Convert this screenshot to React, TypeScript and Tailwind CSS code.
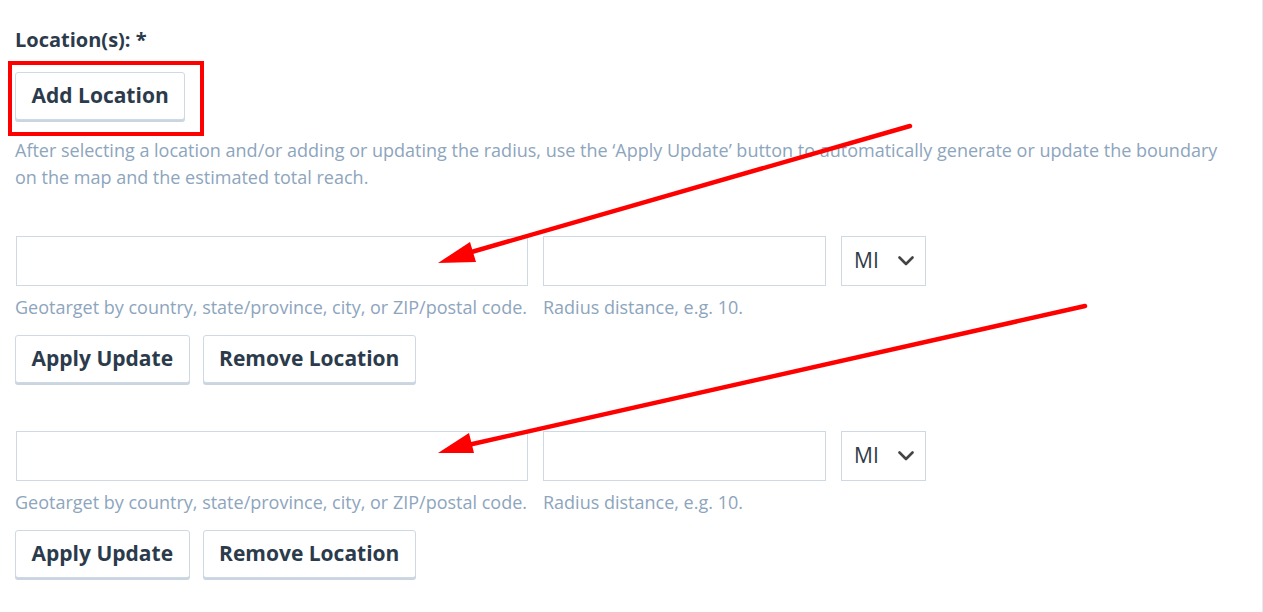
function LocationRow() {
  return (
    <div className="mt-[48px] first:mt-0">
      <div className="flex items-start">
        <div className="w-[513px]">
          <input className="ml-px block w-[512px] h-[50px] border border-[#cfd9e3] bg-white px-3 text-[18px] outline-none" />
          <p className="mt-[9px] text-[18px] leading-[24px] text-[#8da5bd]">
            Geotarget by country, state/province, city, or ZIP/postal code.
          </p>
        </div>
        <div className="ml-[15px] w-[283px]">
          <input className="block w-full h-[50px] border border-[#cfd9e3] bg-white px-3 text-[18px] outline-none" />
          <p className="mt-[9px] text-[18px] leading-[24px] text-[#8da5bd]">Radius distance, e.g. 10.</p>
        </div>
        <div className="ml-[15px] flex h-[50px] w-[85px] items-center justify-between border border-[#cfd9e3] bg-white pl-[12px] pr-[11px] text-[21px] text-[#2f3b47]">
          <span>MI</span>
          <svg width="16" height="10" viewBox="0 0 16 10">
            <path d="M1.5 1.5 8 8l6.5-6.5" fill="none" stroke="#444" strokeWidth="2.6" strokeLinecap="round" strokeLinejoin="round" />
          </svg>
        </div>
      </div>
      <div className="mt-[16px] flex gap-[13px]">
        <Button>Apply Update</Button>
        <Button>Remove Location</Button>
      </div>
    </div>
  );
}

function Button({ children }: { children: React.ReactNode }) {
  return (
    <button className="h-[48px] rounded-[3px] border border-[#cfd9e3] bg-white px-[15.5px] text-[21px] font-bold text-[#2c3b4b] shadow-[0_2px_0_#c9d5e1]">
      {children}
    </button>
  );
}

export default function App() {
  return (
    <div className="relative min-h-[612px] border-r border-[#e3ebf3] bg-white pl-[15px] pt-[27px] font-['Open_Sans',sans-serif]">
      <label className="block text-[20px] font-bold leading-[26px] text-[#2c3b4b]">Location(s): *</label>
      <div className="mt-[19px]">
        <Button>Add Location</Button>
      </div>
      <p className="mt-[17px] w-[1222px] text-[18px] leading-[27px] text-[#8da5bd]">
        After selecting a location and/or adding or updating the radius, use the ‘Apply Update’ button to automatically generate or update the boundary on the map and the estimated total reach.
      </p>
      <div className="mt-[45px]">
        <LocationRow />
        <LocationRow />
      </div>

      {/* annotations */}
      <div className="pointer-events-none absolute left-[8px] top-[61px] h-[75px] w-[196px] border-4 border-[#ff0000]" />
      <svg className="pointer-events-none absolute left-0 top-0" width="1263" height="612">
        <line x1="910" y1="126" x2="468" y2="253" stroke="#ff0000" strokeWidth="4.5" strokeLinecap="round" />
        <polygon points="438,263 470,242 476,262" fill="#ff0000" />
        <line x1="1085" y1="306" x2="468" y2="445" stroke="#ff0000" strokeWidth="4.5" strokeLinecap="round" />
        <polygon points="438,453 469,433 474,453" fill="#ff0000" />
      </svg>
    </div>
  );
}
